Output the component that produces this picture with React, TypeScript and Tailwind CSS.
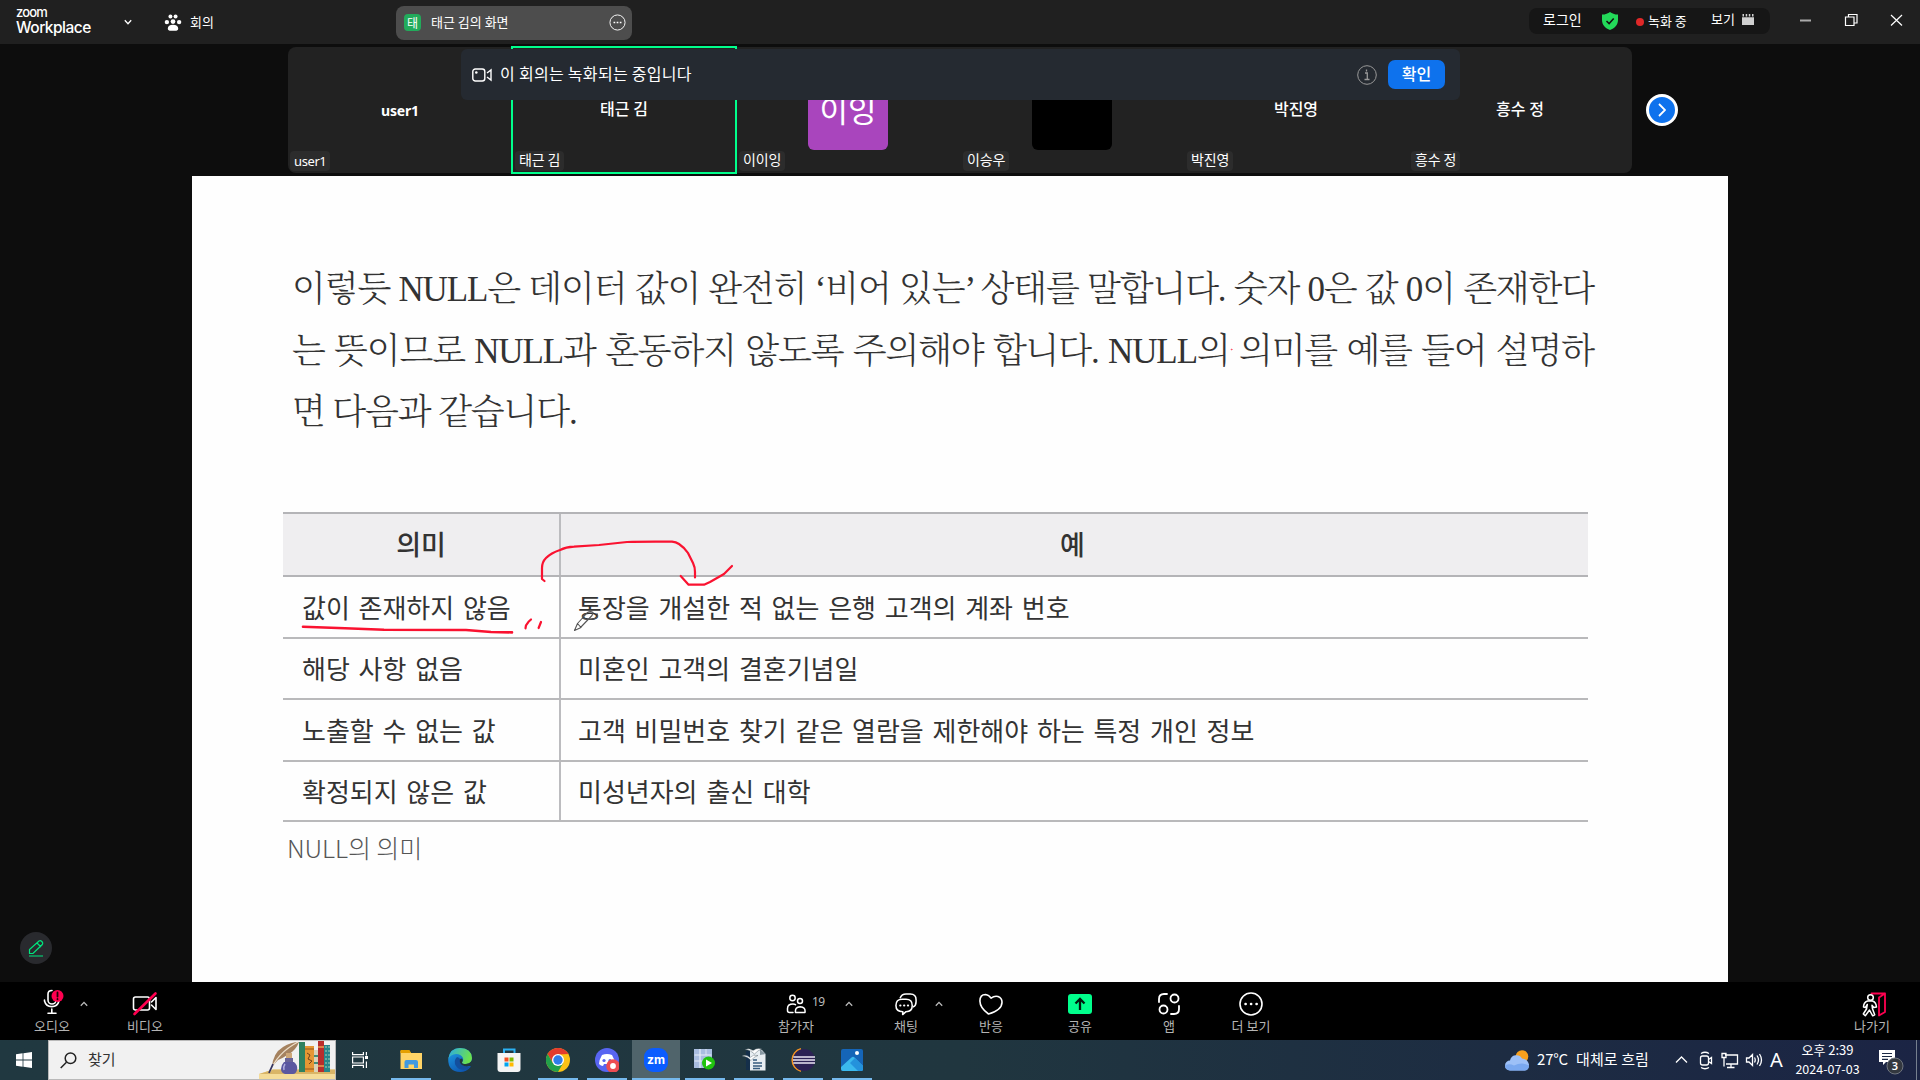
import React from "react";

const ui = "font-['Noto_Sans_CJK_KR',sans-serif]";

function Chevron({ up = false, className = "" }: { up?: boolean; className?: string }) {
  return (
    <svg viewBox="0 0 8 6" className={`h-[6px] w-2 shrink-0 ${className}`} fill="none" stroke="currentColor" strokeWidth="1.3">
      <path d={up ? "M.8 4.8 4 1.4l3.2 3.4" : "M.8 1.2 4 4.8l3.2-3.6"} />
    </svg>
  );
}

function TopBar() {
  return (
    <header className="flex h-11 shrink-0 items-center bg-[#202020] text-white">
      <div className="ml-4 flex w-[75px] flex-col font-['Inter',sans-serif]">
        <span className="h-[11px] text-[13px] leading-[9px] font-medium tracking-[-0.8px]">zoom</span>
        <span className="text-[15.5px] leading-[17px] font-medium tracking-[-0.5px]">Workplace</span>
      </div>
      <Chevron className="ml-[33px]" />
      <svg viewBox="0 0 18 18" className="ml-8 h-[17px] w-[18px]" fill="white">
        <circle cx="6.3" cy="2.600" r="2.1" />
        <circle cx="11.7" cy="2.600" r="2.1" />
        <circle cx="2.5" cy="8.6" r="2.3" />
        <circle cx="15.5" cy="8.6" r="2.3" />
        <circle cx="9" cy="8" r="2.5" />
        <path d="M3.500 15.500c0-2.500 2-4 5.500-4s5.500 1.500 5.500 4c0 1.500-1.500 2.200-3 2.200h-5c-1.500 0-3-.7-3-2.200z" />
      </svg>
      <span className="ml-2 w-[206px] text-[13px] leading-5">회의</span>
      <div className="mt-px flex h-[34px] w-[236px] items-center rounded-lg bg-[#4d4d4d] pr-1.5 pl-2">
        <span className="flex h-[17px] w-[17px] items-center justify-center rounded bg-[#22ab5b] text-[12px] leading-none">태</span>
        <span className="mb-px ml-2.5 flex-1 text-[13px] leading-5">태근 김의 화면</span>
        <svg viewBox="0 0 18 18" className="h-[17px] w-[17px]" fill="none" stroke="white">
          <circle cx="9" cy="9" r="8" />
          <path d="M4.800 9h1.800M8.100 9h1.800M11.400 9h1.800" strokeWidth="1.600" />
        </svg>
      </div>
      <div className="mb-[2px] ml-auto flex h-[26px] w-[241px] items-center rounded-lg bg-[#161616]">
        <span className="mb-[5px] ml-3.5 w-[59px] text-[14px] leading-5">로그인</span>
        <svg viewBox="0 0 16 18" className="mb-px h-[18px] w-4">
          <path d="M8 0c2 1.600 4.500 2.500 8 2.600V8c0 5-3.500 8.300-8 10-4.500-1.700-8-5-8-10V2.600C3.500 2.500 6 1.600 8 0z" fill="#23d959" />
          <path d="m4.500 9 2.600 2.600L11.700 6.500" fill="none" stroke="#111" strokeWidth="1.500" />
        </svg>
        <span className="mt-0.5 ml-[18px] h-2 w-2 rounded-full bg-[#e02828]" />
        <span className="mb-px ml-1 w-[63px] text-[13px] leading-5">녹화 중</span>
        <span className="mb-[5px] w-[31px] text-[13px] leading-5">보기</span>
        <svg viewBox="0 0 12 11" className="mb-[3px] h-[11px] w-3" fill="#d0d0d0">
          <path d="M.5 0h1.500v2.500H.5zM3.700 0h1.500v2.500H3.700zM6.800 0h1.500v2.500H6.800zM10 0h1.500v2.500H10zM0 3.300h12V11H0z" />
        </svg>
      </div>
      <svg viewBox="0 0 104 14" className="mr-4 mb-[4px] ml-[30px] h-[14px] w-[104px]" fill="none" stroke="white" strokeWidth="1.200">
        <path d="M0 7.500h11" stroke="#aaa" strokeWidth="2" />
        <path d="M45.500 4h8.500v8.500h-8.500zM48.500 3.500V1.500H57v8.500h-2.500" />
        <path d="m91 2 11 10.500M102 2 91 12.500" />
      </svg>
    </header>
  );
}

const participants = [
  { name: "user1", kind: "bold" },
  { name: "태근 김", kind: "active" },
  { name: "이이잉", kind: "purple" },
  { name: "이승우", kind: "black" },
  { name: "박진영", kind: "name" },
  { name: "흥수 정", kind: "name" },
];

function Strip() {
  return (
    <section className="relative flex h-[132px] shrink-0 pt-[3px] pl-72">
      <div className="flex h-[126px] w-[1344px] rounded-lg bg-[#222222] text-white">
        {participants.map((p) => (
          <div key={p.name} className="relative flex h-full w-56 items-center justify-center">
            {p.kind === "active" && <div className="absolute -inset-x-px -inset-y-px border-2 border-[#00ff8c]" />}
            {p.kind === "bold" && <span className="font-['Noto_Sans',sans-serif] text-[14px] font-bold tracking-[-0.2px]">{p.name}</span>}
            {(p.kind === "name" || p.kind === "active") && <span className="mb-1 text-[16px] leading-6 font-medium">{p.name}</span>}
            {p.kind === "purple" && (
              <div className="flex h-20 w-20 items-center justify-center rounded-md bg-[#a945bd] pb-[3px] text-[31px] leading-none">이잉</div>
            )}
            {p.kind === "black" && <div className="h-20 w-20 rounded-md bg-black" />}
            {p.kind === "bold" ? (
              <span className="absolute bottom-[2px] left-[2px] h-5 rounded bg-[#2c2c2c] px-1 font-['Noto_Sans',sans-serif] text-[13px] leading-5 tracking-[-0.4px]">{p.name}</span>
            ) : (
              <span className="absolute bottom-[2px] left-[3px] h-5 rounded bg-[#2c2c2c] px-1 text-[14px] leading-[16px] tracking-[-0.1px]">{p.name}</span>
            )}
          </div>
        ))}
      </div>
      <button className="mt-[47px] ml-[14px] flex h-8 w-8 items-center justify-center rounded-full border-[3px] border-white bg-[#0e72ed]">
        <svg viewBox="0 0 8 14" className="h-[14px] w-2" fill="none" stroke="white" strokeWidth="1.800">
          <path d="m1 1 6 6-6 6" />
        </svg>
      </button>
      <div className="absolute top-[5px] left-[461px] flex h-[51px] w-[999px] items-center rounded-md bg-[#252a31] pr-[15px] pl-[11px] text-white">
        <svg viewBox="0 0 20 14" className="h-[14px] w-5" fill="none" stroke="white" strokeWidth="1.400">
          <rect x=".8" y="1" width="12" height="12" rx="2.500" />
          <circle cx="4.300" cy="4.500" r="1.300" fill="white" stroke="none" />
          <path d="m15 5 4-3v10l-4-3" />
        </svg>
        <span className="mb-[3px] ml-2 flex-1 text-[16px] leading-6 tracking-[0.3px]">이 회의는 녹화되는 중입니다</span>
        <svg viewBox="0 0 20 20" className="mr-[11px] h-5 w-5" fill="none" stroke="#999">
          <circle cx="10" cy="10" r="9.300" />
          <path d="M8 8h2.300v6.500M7.500 14.500h5M9.500 4.500v2" strokeWidth="1.300" />
        </svg>
        <button className="h-[29px] w-[57px] rounded-[7px] bg-[#0e72ed] pb-[2px] text-[16px] leading-[27px] font-medium">확인</button>
      </div>
    </section>
  );
}

const rows = [
  ["값이 존재하지 않음", "통장을 개설한 적 없는 은행 고객의 계좌 번호"],
  ["해당 사항 없음", "미혼인 고객의 결혼기념일"],
  ["노출할 수 없는 값", "고객 비밀번호 찾기 같은 열람을 제한해야 하는 특정 개인 정보"],
  ["확정되지 않은 값", "미성년자의 출신 대학"],
];
const rowHeights = ["h-[62px]", "h-[61px]", "h-[62px]", "h-[60px]"];

function Slide() {
  return (
    <main className="relative h-[806px] w-[1536px] bg-[#fefefe] pt-[83px] pl-[91px] text-[#333]">
      <div className="ml-[9px] w-[1302px] font-['Liberation_Serif','Noto_Serif_CJK_KR','Noto_Sans_CJK_KR',serif] text-[35px] leading-[61.500px] font-light tracking-[-1.1px]">
        <p className="whitespace-nowrap [text-align-last:justify]">이렇듯 NULL은 데이터 값이 완전히 ‘비어 있는’ 상태를 말합니다. 숫자 0은 값 0이 존재한다</p>
        <p className="whitespace-nowrap [text-align-last:justify]">는 뜻이므로 NULL과 혼동하지 않도록 주의해야 합니다. NULL의 의미를 예를 들어 설명하</p>
        <p className="whitespace-nowrap">면 다음과 같습니다.</p>
      </div>
      <div className="mt-[68px] w-[1305px] border-t-2 border-[#b4b4b7] text-[26px] tracking-[-0.03px] [word-spacing:3px]">
        <div className="flex h-[63px] border-b-2 border-[#b4b4b7] bg-[#efeef0] text-[27px] font-medium">
          <div className="flex w-[278px] items-center justify-center border-r-2 border-[#bcbcbf]">의미</div>
          <div className="flex flex-1 items-center justify-center pr-1">예</div>
        </div>
        {rows.map((r, i) => (
          <div key={r[0]} className={`flex border-b-2 border-[#b9b9bb] ${rowHeights[i]}`}>
            <div className="flex w-[278px] items-center border-r-2 border-[#bcbcbf] pb-px pl-[19px]">{r[0]}</div>
            <div className="flex items-center pb-px pl-[17px]">{r[1]}</div>
          </div>
        ))}
      </div>
      <p className="mt-[5px] ml-1 text-[25px] leading-10 font-light tracking-[-0.1px] text-[#555]">NULL의 의미</p>
      <svg viewBox="192 176 1536 806" className="absolute inset-0 h-[806px] w-[1536px]" fill="none" stroke="#fa1230" strokeWidth="2.200" strokeLinecap="round" strokeLinejoin="round">
        <path d="M544.500 581 542 579V568Q542 562 546 558 551 553 560 550 566 547 574 546.700L599 545 627 542Q640 541.500 672 541.700 676 542 679 544 685 548 688 553L693 563Q695 567 695 572V577.500" />
        <path d="M680.700 576 688.600 584.700H704L710 582 724 574 732 566" />
        <path d="m303 626.700 42 1.600 39 1.400 82 .3 25 2 21 .4" strokeWidth="2.600" />
        <path d="m525.500 628.300.5-3 2.500-3.500 2.500-2.300M538.600 628l2.400-6" />
        <circle cx="1231.500" cy="349.500" r=".5" strokeWidth=".5" />
        <path d="m574.500 630.500 3-7 10-11q3-2 5.500 0l-1 3-12 12.500zM577.500 623.500l3.500 4M586 614q-5 2-3 4.500 5 2 12 0 4-2 2-5" stroke="#555" strokeWidth="1.100" />
      </svg>
    </main>
  );
}

function Tool({ label, className, children }: { label: string; className: string; children: React.ReactNode }) {
  return (
    <div className={`flex flex-col items-center ${className}`}>
      <div className="flex h-[37px] items-center justify-center pt-[7px]">{children}</div>
      <span className="text-[13px] leading-[14px] whitespace-nowrap text-[#b4b4b4]">{label}</span>
    </div>
  );
}

const stroke = { fill: "none", stroke: "white", strokeWidth: 1.6, strokeLinecap: "round" as const, strokeLinejoin: "round" as const };

function Toolbar() {
  return (
    <nav className="flex h-[58px] shrink-0 bg-black text-[#bbb]">
      <Tool label="오디오" className="ml-[32px] w-10">
        <svg viewBox="0 0 24 26" className="mb-1 ml-1 h-[26px] w-6" {...stroke}>
          <path d="M10 1.500C7 1.500 6 3 6 5v6a4 4 0 0 0 8 0v-1M2.500 11v1a7.500 7.500 0 0 0 14.500 0v-1M9.800 20v4M6 24.200h8" />
          <circle cx="15.500" cy="7" r="6" fill="#ff0050" stroke="none" />
          <path d="M15.500 3.500v4M15.500 10v.3" stroke="#200008" strokeWidth="1.800" />
        </svg>
      </Tool>
      <Chevron up className="mt-[19px] ml-2" />
      <Tool label="비디오" className="ml-[37px] w-10">
        <svg viewBox="0 0 26 26" className="h-[26px] w-[26px]" {...stroke}>
          <rect x="1.500" y="6" width="16" height="13" rx="2" />
          <path d="m19.500 11 4.500-4.500v12L19.500 14" />
          <path d="M2.500 23 23.500 2.500" stroke="#ff0050" strokeWidth="2.600" />
        </svg>
      </Tool>
      <Tool label="참가자" className="ml-[607px] w-12">
        <svg viewBox="0 0 20 20" className="h-5 w-5" {...stroke} strokeWidth={1.5}>
          <circle cx="6.500" cy="4" r="2.700" />
          <circle cx="14" cy="7" r="2.500" />
          <path d="M7 18.500H3.500q-2 0-2-2v-2Q1.500 10 7 10q1.500 0 2.500.7" />
          <path d="M9.500 18.500q-.7-5.500 4.700-5.800 5.500.3 4.800 5.800z" />
        </svg>
      </Tool>
      <span className="mt-[11px] -ml-2 w-[14px] font-['Noto_Sans',sans-serif] text-[12px] leading-[18px] tracking-[-0.5px]">19</span>
      <Chevron up className="mt-[19px] ml-[19px]" />
      <Tool label="채팅" className="ml-[33px] w-10">
        <svg viewBox="0 0 24 24" className="h-[23px] w-6" {...stroke}>
          <path d="M6 5q1.500-4 6-4h4.500q6 0 6 6v2q0 4-3 5.500" />
          <path d="M8 6.500h4q6.500 0 6.500 6.500T12 19.500L8.500 22.500l.2-3Q1.500 19.500 1.500 13T8 6.500z" />
          <path d="M6 13h.2M10 13h.2M14 13h.2" strokeWidth="2.200" />
        </svg>
      </Tool>
      <Chevron up className="mt-[19px] ml-[9px]" />
      <Tool label="반응" className="ml-[28px] w-10">
        <svg viewBox="0 0 24 22" className="h-[22px] w-6" {...stroke}>
          <path d="M9.500 21Q1 15 .9 8 1 1.500 6.500 1.500q3.500.3 5.500 3.700 3.500-2.700 7-1.700 4 1.500 4 5.500.2 8-13.500 12z" />
        </svg>
      </Tool>
      <Tool label="공유" className="ml-[49px] w-10">
        <svg viewBox="0 0 24 20" className="h-5 w-6">
          <rect width="24" height="20" rx="3" fill="#00ff8c" />
          <path d="M12 16V6M7.500 9.500 12 5l4.500 4.500" fill="none" stroke="#001a0d" strokeWidth="2.300" />
        </svg>
      </Tool>
      <Tool label="앱" className="ml-[49px] w-10">
        <svg viewBox="0 0 22 22" className="h-[22px] w-[22px]" {...stroke} strokeWidth={1.8}>
          <circle cx="16.500" cy="5.500" r="4" />
          <circle cx="5.500" cy="16.500" r="4" />
          <path d="M1 9V6q0-5 5-5h3M21 13v3q0 5-5 5h-3" />
        </svg>
      </Tool>
      <Tool label="더 보기" className="ml-[42px] w-10">
        <svg viewBox="0 0 24 24" className="h-6 w-6" {...stroke}>
          <circle cx="12" cy="12" r="11" />
          <path d="M6.500 12h.2M12 12h.2M17.500 12h.2" strokeWidth="2.500" />
        </svg>
      </Tool>
      <Tool label="나가기" className="mr-7 ml-auto w-10">
        <svg viewBox="0 0 24 25" className="ml-1 h-[25px] w-6" {...stroke} strokeWidth={1.5}>
          <path d="M9.500 1.500h13.500v18.500l-6 3.500V5.500L23 1.500" stroke="#ff0050" strokeWidth="1.800" />
          <circle cx="8.500" cy="5.500" r="2.800" />
          <path d="M5.500 9q-4 1.500-4 6l2 .5 1.800-3-.8 4.500-3.200 5 2 1.800 4.200-5.800 3.200 5.800 2-1-2.200-6-.5-3.500 1.800 2.200 2.700-.5Q14 10 10.500 9z" />
        </svg>
      </Tool>
    </nav>
  );
}

function Books() {
  return (
    <svg viewBox="0 0 76 38" className="h-[38px] w-[76px]">
      <path d="M0 33 14 28.500h62V38H0z" fill="#f5dc98" />
      <path d="M0 33 14 28.500h62V33z" fill="#d9b567" />
      <path d="M13 26Q14 12 24 6 32 1 40 1q-3 8-10 12-6 4-11 6-3 3-6 7z" fill="#a5825f" />
      <path d="M11 31Q18 12 39 1" fill="none" stroke="#ede0cc" strokeWidth="1.200" />
      <path d="m10 32 4-9" stroke="#34335e" strokeWidth="1.800" />
      <path d="M26 17h8v5h-8z" fill="#6a6597" />
      <path d="M27 12h6v5h-6z" fill="#cda778" />
      <path d="M25 21h10q4 3 3 8-1 4-4 4h-8q-4-1-4-5t3-7z" fill="#5b58a0" />
      <path d="M26 23q-2 3-1 6" stroke="#b0aee0" strokeWidth="1.500" fill="none" />
      <path d="M40 1h6v30h-6z" fill="#2f8160" />
      <path d="M46 5h9v26h-9z" fill="#e59734" />
      <path d="M48 12l3 2-2 4 4 2-3 3" stroke="#70421a" fill="none" />
      <path d="M46 8h9M46 28h9" stroke="#97571b" />
      <path d="M55 9h4v22h-4z" fill="#d9d3b8" />
      <path d="M55 15h4M55 22h4" stroke="#438b78" strokeWidth="2" />
      <path d="M59 0h6v31h-6z" fill="#b92d2c" />
      <path d="M59 6h6M59 25h6" stroke="#e8a152" strokeWidth="1.500" />
      <path d="M65 4h6v27h-6z" fill="#27858a" />
      <path d="M67 5v24M70 5v24" stroke="#a7d0bb" strokeDasharray="2 2" />
    </svg>
  );
}

function TaskButton({ w, ml, active = false, running = true, children }: { w: string; ml: string; active?: boolean; running?: boolean; children: React.ReactNode }) {
  return (
    <div className={`flex h-10 shrink-0 items-center justify-center ${w} ${ml} ${running ? "border-b-2 border-[#76b9ed]" : "pb-[2px]"} ${active ? "bg-[#50646b]" : ""}`}>
      <svg viewBox="0 0 24 24" className="mt-[2px] h-6 w-6">{children}</svg>
    </div>
  );
}

function Taskbar() {
  return (
    <footer className="flex h-10 shrink-0 bg-linear-to-r from-[#203840] via-[#20363f] to-[#1b2444] text-white">
      <div className="flex w-12 items-center justify-center">
        <svg viewBox="0 0 16 16" className="h-4 w-4" fill="white">
          <path d="M0 2.200 6.600 1.300v6.300H0zM7.400 1.200 16 0v7.600H7.400zM0 8.400h6.600v6.300L0 13.800zM7.400 8.400H16V16l-8.600-1.200z" />
        </svg>
      </div>
      <div className="flex h-10 w-72 items-center border border-[#b9b9b9] bg-[#f1f1f1] pl-[11px] text-[#333]">
        <svg viewBox="0 0 17 17" className="h-[17px] w-[17px]" fill="none" stroke="#222" strokeWidth="1.500">
          <circle cx="10.500" cy="6.300" r="5.300" />
          <path d="M6.500 10.200.7 16" />
        </svg>
        <span className="mb-[3px] ml-[11px] flex-1 text-[15px] leading-5">찾기</span>
        <Books />
      </div>
      <div className="flex w-12 items-center justify-center">
        <svg viewBox="0 0 16 16" className="h-4 w-4" fill="none" stroke="white" strokeWidth="1.200">
          <path d="M.6 0v2.600h10.800V0M.6 5h10.800v6H.6zM.6 16v-2.600h10.800V16M14.400 0v3.500M14.400 9.500V16" />
          <path d="M13 4h3v3h-3z" fill="white" stroke="none" />
        </svg>
      </div>
      <TaskButton w="w-10" ml="ml-[7px]">
        <path d="M1.500 3h9l1.500 2h11v16h-21.500z" fill="#ffd467" />
        <path d="M1.500 2h9l1.500 3H1.500z" fill="#e5a000" />
        <path d="M5.500 20v-6q0-2 2-2h9.500q2 0 2 2v6h-4v-3.500h-5.500v3.500z" fill="#4199e0" />
      </TaskButton>
      <TaskButton w="w-10" ml="ml-[9px]" running={false}>
        <defs>
          <linearGradient id="eg" x1="0" y1="0" x2="1" y2=".3"><stop offset="0" stopColor="#2ba9e6" /><stop offset="1" stopColor="#6be24f" /></linearGradient>
          <linearGradient id="eb" x1="0" y1="0" x2=".6" y2="1"><stop offset="0" stopColor="#1fa1e8" /><stop offset="1" stopColor="#0d56b0" /></linearGradient>
        </defs>
        <path d="M.2 11Q2 0 12 0q11.500.5 12 10 0 5.500-6 6-3.500 0-4-1.200L23 18.500Q18.500 24 12 24 0 23.500.2 11z" fill="url(#eb)" />
        <path d="M.2 11Q2 0 12 0q11.500.5 12 10 0 5.500-6 6-4 0-4-1.500 2-2 1-4.500Q13 6 8 6 2.500 6.500.2 11z" fill="url(#eg)" />
        <path d="M9 9Q5 13 8 18q3.500 5 10 3.500 2.500-.7 4.500-3-4 1.500-8-1.500-3-2.500-2-5.500Q11 9 9 9z" fill="#134f9d" />
        <path d="M14 14.500q0 1.500 4 1.500 3.500-.2 5-2.200.5 2-1 3.700-4 2-8-.5-3-2.500-2-5.500 1-1.800 2.500-.5.800 1.500-.5 3.500z" fill="#20383f" />
      </TaskButton>
      <TaskButton w="w-10" ml="ml-[9px]" running={false}>
        <path d="M7 6V1.500h10.500V6" fill="none" stroke="#2bb1f3" strokeWidth="2" />
        <path d="M.5 5h23v16q0 3-3 3h-17q-3 0-3-3z" fill="#f4f4f4" />
        <path d="M7.500 9.500h4v4h-4z" fill="#f25022" /><path d="M12.500 9.500h4v4h-4z" fill="#7fba00" />
        <path d="M7.500 14.500h4v4h-4z" fill="#00a4ef" /><path d="M12.500 14.500h4v4h-4z" fill="#ffb900" />
      </TaskButton>
      <TaskButton w="w-10" ml="ml-[9px]">
        <circle cx="12" cy="12" r="12" fill="#fbc116" />
        <path d="M1.600 6A12 12 0 0 1 22.400 6L12 6.500 6.800 15z" fill="#e33b2e" />
        <path d="M1.600 6A12 12 0 0 0 12 24l5.200-9H6.800z" fill="#22a04a" />
        <circle cx="12" cy="12" r="6" fill="white" />
        <circle cx="12" cy="12" r="4.700" fill="#2f7de9" />
      </TaskButton>
      <TaskButton w="w-10" ml="ml-[9px]">
        <circle cx="12" cy="12" r="12" fill="#5865f2" />
        <path d="M7 7q5-2 10 0 3 5 3 9-2 2-4 2l-1-2H9l-1 2q-2 0-4-2 0-4 3-9z" fill="white" />
        <circle cx="9" cy="12.500" r="1.600" fill="#5865f2" /><circle cx="15" cy="12.500" r="1.600" fill="#5865f2" />
        <circle cx="18" cy="18" r="6.800" fill="#ed4c52" />
        <circle cx="18" cy="18" r="2.900" fill="white" />
      </TaskButton>
      <TaskButton w="w-12" ml="ml-[5px]" active>
        <rect width="24" height="24" rx="9" fill="#0b5cff" />
        <text x="12" y="16" fontSize="12" fontWeight="700" textAnchor="middle" fill="white" fontFamily="Inter, sans-serif" textLength="18" lengthAdjust="spacingAndGlyphs">zm</text>
      </TaskButton>
      <TaskButton w="w-10" ml="ml-[5px]">
        <path d="M1 1h18v19H1z" fill="#a9bde0" />
        <path d="M1.500 7h17M1.500 13h17M7 1v19" stroke="#e7edf8" strokeWidth="1.200" />
        <path d="M13 1v6" stroke="#e7edf8" strokeWidth=".8" />
        <circle cx="15.500" cy="15" r="6.500" fill="#20c40e" />
        <path d="m13 11.500 6 3.500-6 3.500z" fill="white" />
      </TaskButton>
      <TaskButton w="w-10" ml="ml-[9px]">
        <path d="M4 3h8v19H4z" fill="#152f4a" />
        <path d="M8 2h12l3.500 4v16.500H8z" fill="#e8eef2" />
        <path d="m18 1 5.500 5-5.500 1z" fill="#8899a3" />
        <path d="M11 12h4M11 15h9M11 18h9M11 20.500h7" stroke="#355b7e" strokeWidth="1.300" />
        <path d="M3 1.500q5-2 8 1.500 3-3.500 9-2-4 1-7.500 5Q9 2 3 1.500zM0 8q4-2 8 1.500 3-3.500 8-2-4 1-7 5-3-4-9-4.500z" fill="white" stroke="#40525c" strokeWidth=".4" />
      </TaskButton>
      <TaskButton w="w-10" ml="ml-[9px]">
        <path d="M10 1A11.300 11.300 0 0 0 10 23" fill="none" stroke="#f69322" strokeWidth="1.800" />
        <circle cx="13" cy="12" r="11" fill="#2c2255" />
        <path d="M2.300 9h21.700M2 12h22.300M2.300 15h21.700" stroke="#e9e6f3" strokeWidth="1.600" />
      </TaskButton>
      <TaskButton w="w-10" ml="ml-[9px]">
        <rect x="1" y="1" width="22" height="22" rx="2" fill="#1565b8" />
        <path d="M1 19 11.500 9.500q1.500-1.500 3 0L23 18v3q0 2-2 2H3q-2 0-2-2z" fill="#3bb9ee" />
        <path d="m10 15 5-5 8 8v3q0 2-2 2h-3z" fill="#2492dc" />
        <circle cx="17" cy="5" r="2" fill="white" />
      </TaskButton>

      <div className="mr-1 ml-auto flex w-[407px] items-center">
        <svg viewBox="0 0 24 21" className="h-[21px] w-6 shrink-0">
          <circle cx="17" cy="6.500" r="6.300" fill="#f7a01d" />
          <path d="M5 20.500a5 5 0 0 1 0-10A6.500 6.500 0 0 1 17 8.500q6 1 7 6 0 6-5 6z" fill="#9dc0f7" />
          <path d="M5 20.500Q0 20 0 15.500q4-2.500 9 0 8-4 15 0 0 5-5 5z" fill="#7aa8ef" />
        </svg>
        <span className="mb-[2px] ml-2 w-[31px] text-[15px] leading-5 tracking-[-0.2px]">27°C</span>
        <span className="mb-[2px] ml-2 w-[100px] shrink-0 text-[15px] leading-5 tracking-[0.1px] whitespace-nowrap">대체로 흐림</span>
        <svg viewBox="0 0 88 20" className="-ml-px h-5 w-[88px] shrink-0" fill="none" stroke="white" strokeWidth="1.300">
          <path d="m1 12.500 5.500-5.500 5.500 5.500" />
          <rect x="25.500" y="6" width="8" height="9" rx="2" />
          <path d="m33.500 9.500 3-2v6l-3-2M26 3.500q4-2.500 8 0M26 17.500q4 2.500 8 0M50 5h12.500v9H51M47 3.500h4v4h-4zM49 7.500v9M56 14v3M52 17.500h7.500" />
          <path d="M71.500 8h2.500l3.500-3.500v11L74 12h-2.500zM79.500 7.500q1.500 2.500 0 5M82 5.500q3 4.500 0 9M84.500 4q4 6 0 12" />
        </svg>
        <span className="mb-px ml-[7px] w-[14px] shrink-0 font-['Noto_Sans',sans-serif] text-[20px] leading-5">A</span>
        <div className="ml-[9px] w-[69px] shrink-0 pb-[3px] text-center text-[12.500px] leading-[19px] whitespace-nowrap">
          <div className="text-[13px]">오후 2:39</div>
          <div>2024-07-03</div>
        </div>
        <svg viewBox="0 0 26 26" className="mt-1 ml-[17px] h-[26px] w-[26px] shrink-0">
          <path d="M0 1h16v12H7l-3 3v-3H0z" fill="white" />
          <path d="M3 4.500h10M3 7.500h10M3 10.300h6" stroke="#1c2945" strokeWidth="1.200" />
          <circle cx="16" cy="17" r="8" fill="#33383f" stroke="#70767f" />
          <text x="16" y="21" fontSize="11" fontWeight="600" textAnchor="middle" fill="white" fontFamily="Noto Sans, sans-serif">3</text>
        </svg>
      </div>
      <div className="h-full border-l border-[#76808f] pr-[3px]" />
    </footer>
  );
}

export default function App() {
  return (
    <div className={`flex h-[1080px] w-[1920px] flex-col overflow-hidden bg-[#0d0d0d] ${ui}`}>
      <TopBar />
      <Strip />
      <div className="flex h-[806px] shrink-0">
        <div className="flex w-48 items-end pb-[18px] pl-5">
          <div className="flex h-8 w-8 items-center justify-center rounded-full bg-[#292a2e]">
            <svg viewBox="0 0 16 17" className="h-[17px] w-4" fill="none" stroke="#00e67e" strokeWidth="1.200">
              <path d="M1.500 13.500V9.500l9.500-8.500q1.500-.8 2.800.5 1.500 1.500.5 3L5 13.500zM9 3l4 4M1 16h14" />
            </svg>
          </div>
        </div>
        <Slide />
      </div>
      <Toolbar />
      <Taskbar />
    </div>
  );
}
